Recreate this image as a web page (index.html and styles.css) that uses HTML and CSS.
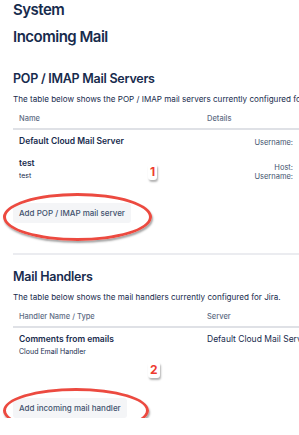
FILE: index.html
```html
<!DOCTYPE html>
<html lang="en">
<head>
    <meta charset="UTF-8">
    <meta name="viewport" content="width=device-width, initial-scale=1.0">
    <title>System - Incoming Mail</title>
    <link rel="stylesheet" href="styles.css">
</head>
<body>
    <div class="page">
        <h1 class="crumb">System</h1>
        <h1 class="title">Incoming Mail</h1>

        <section class="mail-section servers">
            <h2>POP / IMAP Mail Servers</h2>
            <p class="desc">The table below shows the POP / IMAP mail servers currently configured for Jira.</p>
            <table class="mail-table">
                <colgroup>
                    <col class="col-name">
                    <col class="col-rest">
                </colgroup>
                <thead>
                    <tr><th>Name</th><th>Details</th></tr>
                </thead>
                <tbody>
                    <tr>
                        <td><div class="row-title">Default Cloud Mail Server</div></td>
                        <td class="details-cell">
                            <dl class="details">
                                <dt>Username:</dt><dd>jira@example.atlassian.net</dd>
                            </dl>
                        </td>
                    </tr>
                    <tr>
                        <td>
                            <div class="row-title">test</div>
                            <div class="row-sub">test</div>
                        </td>
                        <td class="details-cell">
                            <dl class="details">
                                <dt>Host:</dt><dd>imap.example.com</dd>
                                <dt>Username:</dt><dd>test</dd>
                            </dl>
                        </td>
                    </tr>
                </tbody>
            </table>
            <div class="actions">
                <div class="callout">
                    <button class="btn">Add POP / IMAP mail server</button>
                    <span class="ring"></span>
                    <span class="step">1</span>
                </div>
            </div>
        </section>

        <section class="mail-section handlers">
            <h2>Mail Handlers</h2>
            <p class="desc">The table below shows the mail handlers currently configured for Jira.</p>
            <table class="mail-table">
                <colgroup>
                    <col class="col-name">
                    <col class="col-rest">
                </colgroup>
                <thead>
                    <tr><th>Handler Name / Type</th><th>Server</th></tr>
                </thead>
                <tbody>
                    <tr>
                        <td>
                            <div class="row-title">Comments from emails</div>
                            <div class="row-sub">Cloud Email Handler</div>
                        </td>
                        <td>Default Cloud Mail Server</td>
                    </tr>
                </tbody>
            </table>
            <div class="actions">
                <div class="callout">
                    <button class="btn">Add incoming mail handler</button>
                    <span class="ring"></span>
                    <span class="step">2</span>
                </div>
            </div>
        </section>
    </div>
</body>
</html>
```

FILE: styles.css
```css
html, body {
    overflow: hidden;
}
body {
    margin: 0;
    font-family: Inter, 'Noto Sans', sans-serif;
    color: #172b4d;
    background: #fff;
}
.page {
    width: 600px;
    padding-left: 13px;
}
h1 {
    margin: 0;
    font-size: 15px;
    line-height: 20px;
    font-weight: 600;
    letter-spacing: -0.5px;
}
.title {
    margin-top: 7px;
}
h2 {
    margin: 0;
    font-size: 12.5px;
    line-height: 16px;
    font-weight: 600;
    letter-spacing: -0.25px;
}
.servers {
    margin-top: 24px;
}
.handlers {
    margin-top: 30px;
    padding-top: 14px;
    border-top: 2px solid #ebecf0;
}
.desc {
    margin: 6px 0 0;
    font-size: 8.1px;
    line-height: 12px;
    white-space: nowrap;
}
.mail-table {
    margin-top: 9px;
    width: 500px;
    table-layout: fixed;
    border-collapse: collapse;
    font-size: 8.5px;
    line-height: 12px;
}
.col-name {
    width: 188px;
}
.mail-table th {
    text-align: left;
    font-weight: 500;
    font-size: 7.5px;
    line-height: 10px;
    color: #5e6c84;
    padding: 0 6px 4px;
    border-bottom: 2px solid #dfe1e6;
}
.mail-table td {
    padding: 5px 6px;
    vertical-align: top;
}
.row-title {
    font-weight: 600;
}
.row-sub {
    margin-top: 1px;
    font-size: 7px;
    line-height: 11px;
}
.details-cell {
    vertical-align: bottom !important;
}
.details {
    display: grid;
    grid-template-columns: 86px auto;
    column-gap: 8px;
    margin: 0;
    font-size: 7.5px;
    line-height: 8.5px;
    color: #42526e;
}
.details dt {
    text-align: right;
}
.details dd {
    margin: 0;
}
.actions {
    margin-top: 14px;
}
.handlers .actions {
    margin-top: 33px;
}
.callout {
    position: relative;
    display: inline-block;
}
.btn {
    display: block;
    background-color: #f4f5f7;
    color: #42526e;
    border: none;
    padding: 0 6px;
    height: 20px;
    line-height: 20px;
    border-radius: 3px;
    font-family: inherit;
    font-size: 8px;
    font-weight: 500;
}
.ring {
    position: absolute;
    left: -10px;
    right: -21px;
    top: -10px;
    bottom: -18px;
    border: 3px solid #ec4a40;
    border-radius: 50%;
    box-shadow: 1px 2px 2px rgba(0, 0, 0, 0.35);
}
.handlers .ring {
    right: -22px;
    bottom: -15px;
}
.step {
    position: absolute;
    left: 135px;
    top: -39px;
    padding: 1px 2px 2px;
    background: #fff;
    color: #ee3b30;
    font-weight: 700;
    font-size: 12px;
    line-height: 13px;
    border-radius: 3px;
    box-shadow: 1px 2px 2px rgba(0, 0, 0, 0.3);
}
.handlers .step {
    top: -36px;
}
```
